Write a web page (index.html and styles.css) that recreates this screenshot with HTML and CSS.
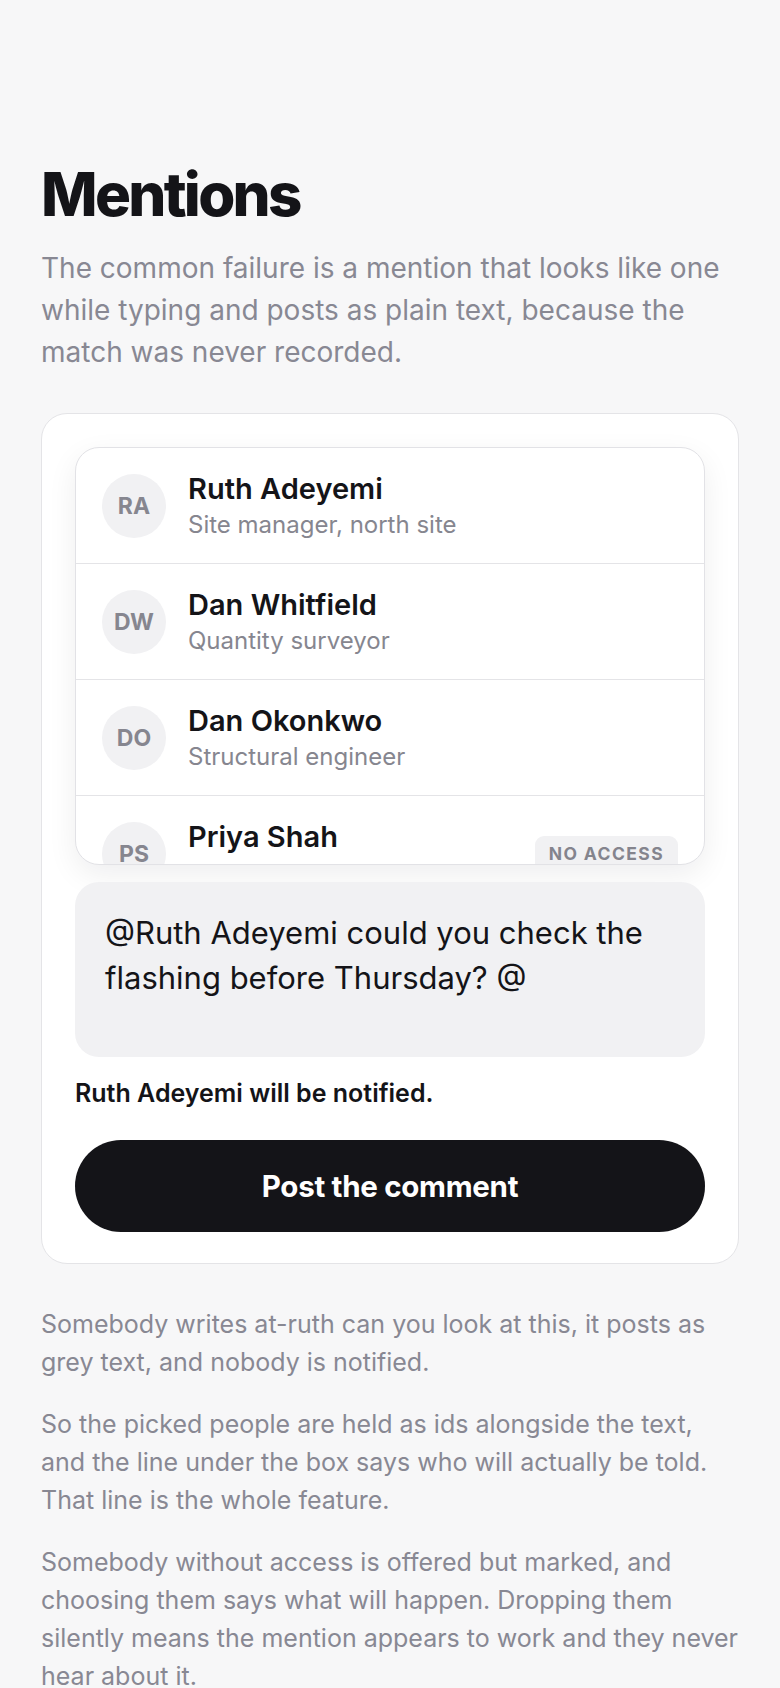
FILE: index.html
```html
<!DOCTYPE html>
<html lang="en">
<head>
<meta charset="utf-8">
<title>Mentions</title>
<link rel="stylesheet" href="styles.css">
</head>
<body>
<main class="page">
  <h1 class="title">Mentions</h1>
  <p class="lead">The common failure is a mention that looks like one while typing and posts as plain text, because the match was never recorded.</p>

  <section class="card">
    <ul class="people">
      <li class="person">
        <span class="avatar">RA</span>
        <span class="info"><span class="name">Ruth Adeyemi</span><span class="role">Site manager, north site</span></span>
      </li>
      <li class="person">
        <span class="avatar">DW</span>
        <span class="info"><span class="name">Dan Whitfield</span><span class="role">Quantity surveyor</span></span>
      </li>
      <li class="person">
        <span class="avatar">DO</span>
        <span class="info"><span class="name">Dan Okonkwo</span><span class="role">Structural engineer</span></span>
      </li>
      <li class="person">
        <span class="avatar">PS</span>
        <span class="info"><span class="name">Priya Shah</span><span class="role role-empty"></span></span>
        <span class="badge">NO ACCESS</span>
      </li>
    </ul>
    <div class="composer">@Ruth Adeyemi could you check the flashing before Thursday? @</div>
    <p class="notice">Ruth Adeyemi will be notified.</p>
    <button class="post" type="button">Post the comment</button>
  </section>

  <p class="body">Somebody writes at-ruth can you look at this, it posts as grey text, and nobody is notified.</p>
  <p class="body">So the picked people are held as ids alongside the text, and the line under the box says who will actually be told. That line is the whole feature.</p>
  <p class="body">Somebody without access is offered but marked, and choosing them says what will happen. Dropping them silently means the mention appears to work and they never hear about it.</p>
</main>
</body>
</html>
```

FILE: styles.css
```css
* { box-sizing: border-box; }

html, body {
  margin: 0;
  padding: 0;
  background: #f7f7f8;
}

body {
  font-family: Inter, "Noto Sans", "Liberation Sans", sans-serif;
  color: #141418;
}

.page {
  padding: 161px 41px 40px;
}

.title {
  margin: 0;
  font-size: 60px;
  line-height: 66px;
  font-weight: 800;
  letter-spacing: -0.045em;
  color: #141418;
}

.lead {
  margin: 20px 0 0;
  font-size: 28px;
  line-height: 42px;
  color: #888893;
}

.card {
  margin-top: 40px;
  background: #ffffff;
  border: 1px solid #e4e4e7;
  border-radius: 26px;
  padding: 33px 33px 31px;
}

.people {
  list-style: none;
  margin: 0;
  padding: 0;
  border: 1px solid #e2e2e6;
  border-radius: 24px;
  height: 418px;
  overflow: hidden;
  background: #ffffff;
  box-shadow: 0 10px 30px rgba(20, 20, 30, 0.07);
}

.person {
  display: flex;
  align-items: center;
  gap: 22px;
  height: 116px;
  padding: 0 26px 0 26px;
  border-bottom: 1px solid #e4e4e7;
  flex-shrink: 0;
}

.avatar {
  flex: 0 0 64px;
  width: 64px;
  height: 64px;
  border-radius: 50%;
  background: #f1f1f3;
  color: #86868f;
  font-size: 23px;
  font-weight: 700;
  display: flex;
  align-items: center;
  justify-content: center;
}

.info {
  flex: 1;
  display: flex;
  flex-direction: column;
}

.name {
  font-size: 29px;
  line-height: 36px;
  font-weight: 600;
  color: #141418;
}

.role {
  margin-top: 3px;
  font-size: 24px;
  line-height: 30px;
  color: #86868f;
}

.role-empty {
  height: 30px;
}

.badge {
  flex: none;
  height: 36px;
  display: flex;
  align-items: center;
  padding: 0 14px;
  border-radius: 9px;
  background: #f1f1f3;
  color: #84848d;
  font-size: 17.5px;
  font-weight: 700;
  letter-spacing: 0.08em;
}

.composer {
  margin-top: 17px;
  height: 175px;
  background: #f1f1f3;
  border-radius: 24px;
  padding: 28px 28px 28px 30px;
  font-size: 31px;
  line-height: 45px;
  color: #141418;
}

.notice {
  margin: 20px 0 0;
  font-size: 25px;
  line-height: 32px;
  font-weight: 600;
  color: #141418;
}

.post {
  display: block;
  width: 100%;
  margin-top: 31px;
  height: 92px;
  border: none;
  border-radius: 46px;
  background: #141418;
  color: #ffffff;
  font-family: inherit;
  font-size: 29.5px;
  font-weight: 700;
  letter-spacing: -0.01em;
}

.body {
  margin: 24px 0 0;
  font-size: 25px;
  line-height: 38px;
  color: #888893;
}

.card + .body {
  margin-top: 41px;
}
```
